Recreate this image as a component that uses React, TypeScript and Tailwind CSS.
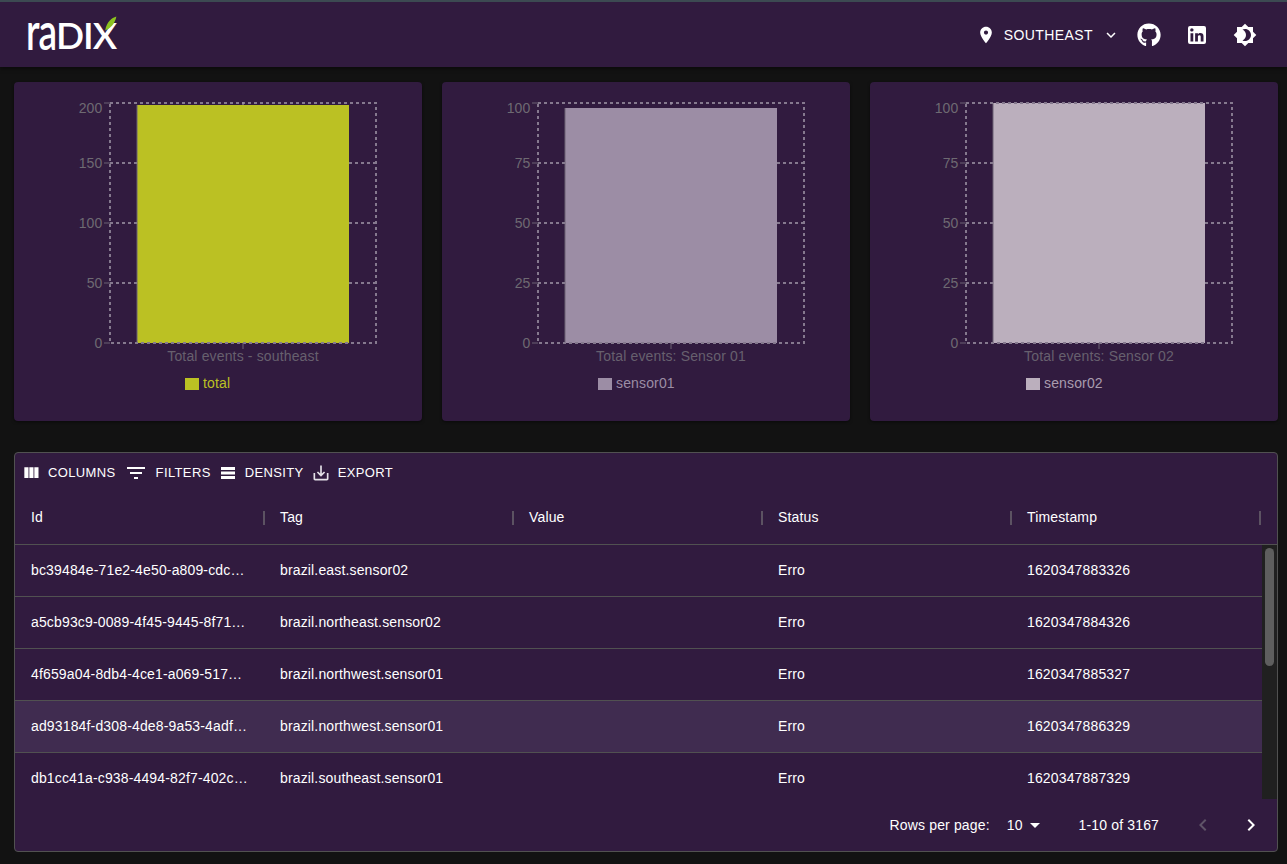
import React from 'react';
import { FaGithub } from 'react-icons/fa';

const PURPLE = 'bg-[#311b3f]';

type ChartProps = {
  ticks: string[];
  barTop: number;
  color: string;
  title: string;
  legend: string;
  legendX: number;
  legendColor: string;
};

// y positions of grid lines, card coordinates
const GRID_Y = [261, 201, 141, 81, 21];

function BarChart({ ticks, barTop, color, title, legend, legendX, legendColor }: ChartProps) {
  return (
    <div className={`${PURPLE} rounded h-[339px] shadow-[0_1px_3px_rgba(0,0,0,0.5)]`}>
      <svg viewBox="0 0 408 339" className="w-full h-full block tracking-[0.15px]" style={{ fontFamily: '"Liberation Sans", Arial, sans-serif' }}>
        <rect x="123" y={barTop} width="212" height={261 - barTop} fill={color} />
        <line x1="123" x2="123" y1={barTop} y2="261" stroke="#6d6274" strokeWidth="1" />
        {GRID_Y.map((y, i) => (
          <g key={y}>
            {i > 0 && i < 4 && <line x1="96" x2="123" y1={y} y2={y} stroke="#85798e" strokeWidth="2" strokeDasharray="3 3" />}
            {i > 0 && i < 4 && <line x1="335" x2="362" y1={y} y2={y} stroke="#85798e" strokeWidth="2" strokeDasharray="3 3" />}
            <line x1="90" x2="96" y1={y} y2={y} stroke="#6d6274" strokeWidth="1" />
            <text x="88.5" y={(i === 4 ? 26 : y) + 5} textAnchor="end" fontSize="14" fill="#6e6a72">{ticks[i]}</text>
          </g>
        ))}
        <rect x="96" y="21" width="266" height="240" fill="none" stroke="#85798e" strokeWidth="2" strokeDasharray="3 3" />
        <line x1="229" x2="229" y1="261" y2="267" stroke="#6d6274" />
        <line x1="229" x2="229" y1="20" y2="23" stroke="#a79cb0" />
        <text x="229" y="279" textAnchor="middle" fontSize="14" fill="#67606e">{title}</text>
        <rect x={legendX} y="296" width="14" height="12" fill={color} />
        <text x={legendX + 18} y="306" fontSize="14" fill={legendColor}>{legend}</text>
      </svg>
    </div>
  );
}

function MuiIcon({ d, size = 24, className = '' }: { d: string; size?: number; className?: string }) {
  return (
    <svg viewBox="0 0 24 24" width={size} height={size} fill="currentColor" className={`shrink-0 ${className}`}>
      <path d={d} />
    </svg>
  );
}

const rows = [
  ['bc39484e-71e2-4e50-a809-cdc…', 'brazil.east.sensor02', 'Erro', '1620347883326'],
  ['a5cb93c9-0089-4f45-9445-8f71…', 'brazil.northeast.sensor02', 'Erro', '1620347884326'],
  ['4f659a04-8db4-4ce1-a069-517…', 'brazil.northwest.sensor01', 'Erro', '1620347885327'],
  ['ad93184f-d308-4de8-9a53-4adf…', 'brazil.northwest.sensor01', 'Erro', '1620347886329'],
  ['db1cc41a-c938-4494-82f7-402c…', 'brazil.southeast.sensor01', 'Erro', '1620347887329'],
];

const columns = ['Id', 'Tag', 'Value', 'Status', 'Timestamp'];

export default function App() {
  return (
    <div className="h-[864px] overflow-hidden bg-[#121212] text-white" style={{ fontFamily: '"Liberation Sans", Arial, sans-serif' }}>
      {/* Header */}
      <div className={`${PURPLE} h-[67px] border-t-[2px] border-[#3c4a52] flex items-center pl-[26px] pr-[30px] shadow-[0_2px_4px_rgba(0,0,0,0.4)]`}>
        <div className="relative h-[34px] flex items-center">
          <span className="text-[37px] leading-none tracking-[-1px] font-semibold" style={{ fontFamily: 'Lato, sans-serif' }}>
            <span className="inline-block scale-y-[1.38] origin-[50%_80%]">ra</span>DIX
          </span>
          <svg viewBox="0 0 12 14" width="13" height="15" className="absolute left-[78px] top-[-2px]">
            <path d="M11.5 0.5C7 2 2.5 5 1 13.5C6 11.5 10 7.5 11.5 0.5Z" fill="#8cc21f" />
          </svg>
        </div>
        <div className="ml-auto flex items-center">
          <MuiIcon d="M12 2C8.13 2 5 5.13 5 9c0 5.25 7 13 7 13s7-7.75 7-13c0-3.87-3.13-7-7-7zm0 9.5c-1.38 0-2.5-1.12-2.5-2.5s1.12-2.5 2.5-2.5 2.5 1.12 2.5 2.5-1.12 2.5-2.5 2.5z" size={20} className="mt-[1px]" />
          <span className="ml-[8px] text-[14px] tracking-[0.4px] mt-[1px]">SOUTHEAST</span>
          <MuiIcon d="M16.59 8.59L12 13.17 7.41 8.59 6 10l6 6 6-6z" size={18} className="ml-[9px]" />
          <FaGithub size={24} className="ml-[17px]" />
          <MuiIcon d="M19 3a2 2 0 0 1 2 2v14a2 2 0 0 1-2 2H5a2 2 0 0 1-2-2V5a2 2 0 0 1 2-2h14m-.5 15.5v-5.3a3.26 3.26 0 0 0-3.26-3.26c-.85 0-1.84.52-2.32 1.3v-1.11h-2.79v8.37h2.79v-4.93c0-.77.62-1.4 1.39-1.4a1.4 1.4 0 0 1 1.4 1.4v4.93h2.79M6.88 8.56a1.68 1.68 0 0 0 1.68-1.68c0-.93-.75-1.69-1.68-1.69a1.69 1.69 0 0 0-1.69 1.69c0 .93.76 1.68 1.69 1.68m1.39 9.94v-8.37H5.5v8.37h2.77z" className="ml-[24px]" />
          <MuiIcon d="M20 8.69V4h-4.69L12 .69 8.69 4H4v4.69L.69 12 4 15.31V20h4.69L12 23.31 15.31 20H20v-4.69L23.31 12 20 8.69zM12 18c-.89 0-1.74-.2-2.5-.55C11.56 16.5 13 14.42 13 12s-1.44-4.5-3.5-5.45C10.26 6.2 11.11 6 12 6c3.31 0 6 2.69 6 6s-2.69 6-6 6z" className="ml-[24px]" />
        </div>
      </div>

      <div className="pl-[14px] pr-[9px]">
        {/* Charts */}
        <div className="grid grid-cols-3 gap-[20px] mt-[15px]">
          <BarChart ticks={['0', '50', '100', '150', '200']} barTop={23} color="#bbc123" title="Total events - southeast" legend="total" legendX={171} legendColor="#bbc123" />
          <BarChart ticks={['0', '25', '50', '75', '100']} barTop={26} color="#9c8da5" title="Total events: Sensor 01" legend="sensor01" legendX={156} legendColor="#9c8da5" />
          <BarChart ticks={['0', '25', '50', '75', '100']} barTop={21} color="#bbafbd" title="Total events: Sensor 02" legend="sensor02" legendX={156} legendColor="#a99cae" />
        </div>

        {/* Table */}
        <div className={`${PURPLE} mt-[31px] h-[400px] border border-[#515151] rounded flex flex-col`}>
          <div className="h-[40px] flex items-center text-[13px] tracking-[0.37px] pl-[6px]">
            <MuiIcon d="M10 18h5V5h-5v13zm-6 0h5V5H4v13zM16 5v13h5V5h-5z" size={20} />
            <span className="ml-[7px]">COLUMNS</span>
            <MuiIcon d="M10 18h4v-2h-4v2zM3 6v2h18V6H3zm3 7h12v-2H6v2z" size={24} className="ml-[8px]" />
            <span className="ml-[8px]">FILTERS</span>
            <svg viewBox="0 0 14 12" width="14" height="12" fill="currentColor" className="ml-[10px]">
              <rect width="14" height="3" />
              <rect y="4.5" width="14" height="3" />
              <rect y="9" width="14" height="3" />
            </svg>
            <span className="ml-[10px]">DENSITY</span>
            <MuiIcon d="M19 12v7H5v-7H3v7c0 1.1.9 2 2 2h14c1.1 0 2-.9 2-2v-7h-2zm-6 .67l2.59-2.58L17 11.5l-5 5-5-5 1.41-1.41L11 12.67V3h2z" size={20} className="ml-[7px] text-[#e4e0e7]" />
            <span className="ml-[7px]">EXPORT</span>
          </div>

          <div className="h-[52px] flex items-center border-b border-[#515151] text-[14px] tracking-[0.15px]">
            {columns.map((col) => (
              <div key={col} className="w-[249px] h-full flex items-center justify-between pl-[16px] pb-[2px]">
                <span>{col}</span>
                <span className="w-[2px] h-[14px] bg-[#5c5262] translate-x-[1px]" />
              </div>
            ))}
          </div>

          <div className="flex h-[254px] overflow-hidden">
            <div className="w-[1247px] text-[14px] tracking-[0.15px] overflow-hidden">
              {rows.map((row, i) => (
                <div key={row[0]} className={`h-[52px] flex items-center border-b border-[#515151] ${i === 3 ? 'bg-[#402c50]' : ''}`}>
                  <div className="w-[249px] pl-[16px]">{row[0]}</div>
                  <div className="w-[249px] pl-[16px]">{row[1]}</div>
                  <div className="w-[249px]" />
                  <div className="w-[249px] pl-[16px]">{row[2]}</div>
                  <div className="w-[249px] pl-[16px]">{row[3]}</div>
                </div>
              ))}
            </div>
            <div className="w-[15px] bg-[#202020] flex justify-center pt-[3px]">
              <div className="w-[9px] h-[118px] rounded-full bg-[#5e5e5e]" />
            </div>
          </div>

          <div className="flex-1 flex items-center justify-end text-[14px] tracking-[0.15px] pr-[14px]">
            <span>Rows per page:</span>
            <span className="ml-[17px]">10</span>
            <MuiIcon d="M7 10l5 5 5-5z" size={24} />
            <span className="ml-[32px]">1-10 of 3167</span>
            <MuiIcon d="M15.41 7.41L14 6l-6 6 6 6 1.41-1.41L10.83 12z" className="ml-[32px] text-[#5f5468]" />
            <MuiIcon d="M10 6L8.59 7.41 13.17 12l-4.58 4.59L10 18l6-6z" className="ml-[24px]" />
          </div>
        </div>
      </div>
    </div>
  );
}
